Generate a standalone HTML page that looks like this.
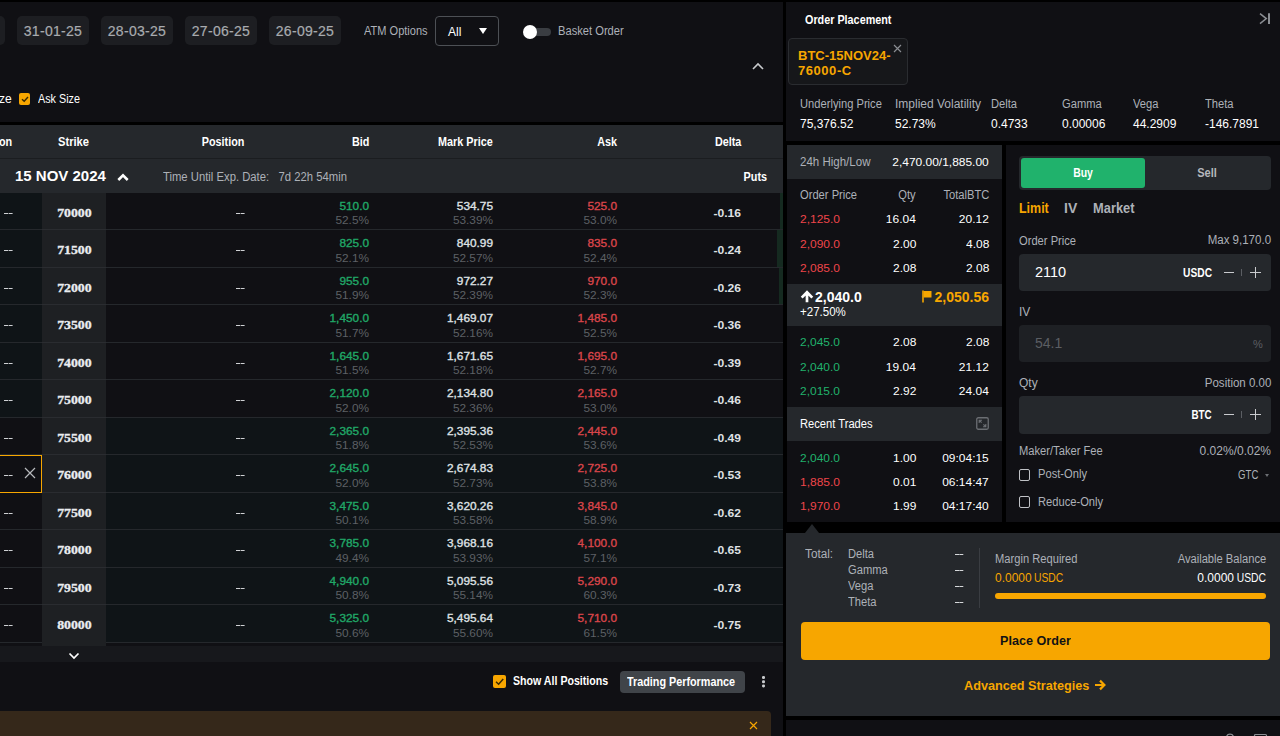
<!DOCTYPE html>
<html><head><meta charset="utf-8"><title>Options</title>
<style>
*{box-sizing:border-box;margin:0;padding:0}
html,body{width:1280px;height:736px;overflow:hidden;background:#000}
body{font-family:"Liberation Sans",sans-serif;font-size:12px;color:#fff;position:relative}
.abs{position:absolute}
#left{position:absolute;left:0;top:2px;width:783px;height:734px;background:#101014;overflow:hidden}
.pill{position:absolute;top:14px;height:29px;width:72px;background:#1d1e22;border-radius:5px;color:#a8abaf;font-size:14px;line-height:30px;-webkit-text-stroke:.2px #a8abaf;text-align:center;letter-spacing:.3px}
.t{position:absolute;white-space:nowrap;line-height:14px;transform-origin:0 50%}
.n{transform:scaleX(.93)}
.n2{transform:scaleX(.96)}
.nb{font-weight:bold;transform:scaleX(.9)}
.ro{transform-origin:100% 50%}
.gray{color:#adb1b8}
.hdr{position:absolute;left:0;top:123px;width:783px;height:34px;background:#25282c;border-bottom:1px solid #1b1d20}
.hdr span{position:absolute;top:10px;font-weight:bold;font-size:12px;line-height:14px;white-space:nowrap;transform:scaleX(.9);transform-origin:100% 50%}
.sub{position:absolute;left:0;top:157px;width:783px;height:34px;background:#25282c}
.row{position:absolute;left:0;width:783px;height:37.5px}
.row>div{position:absolute;top:0;height:37.5px;border-bottom:1px solid #25282c}
.lc{left:0;width:42px}
.lc.sel{border:1px solid #f7a600 !important;border-left:none !important}
.dd,.pos{position:absolute;left:3.5px;top:20px;width:4px;height:1.4px;background:#cfd1d4;box-shadow:4.6px 0 0 #cfd1d4;font-size:0}
.rx{position:absolute;left:24px;top:11px;width:12px;height:12px}
.lc.sel .dd{top:19px}
.sk{left:42px;width:64px;background:#1e2023;border-bottom-color:#2a2c30 !important;text-align:center}
.sk span{display:inline-block;font-family:"Liberation Serif",serif;font-weight:bold;font-size:11.5px;line-height:40px;color:#eaecef;transform:scaleX(1.2);-webkit-text-stroke:.3px #eaecef}
.rc{left:106px;width:677px}
.pos{left:130px}
.c{position:absolute;top:6px;text-align:right;width:90px}
.c b,.c i{display:block;font-style:normal;line-height:14.5px;font-size:11px;transform:scaleX(1.075);transform-origin:100% 50%}
.c b{font-weight:normal;-webkit-text-stroke:.35px currentColor}
.c i{color:#5d6065}
.bid{right:414px}.mark{right:290px}.ask{right:166px}
.g{color:#20a767}.r{color:#d9454a}.w{color:#dfe1e4}
.dl{position:absolute;right:42px;top:13px;font-weight:bold;font-size:11px;color:#dfe1e4;line-height:14px;transform:scaleX(1.1);transform-origin:100% 50%}
.gb{position:absolute;right:0;top:0;height:36.5px;background:#152a20}
</style></head><body>
<div id="left">
<div class="pill" style="left:-67.5px"></div>
<div class="pill" style="left:17px">31-01-25</div>
<div class="pill" style="left:101px">28-03-25</div>
<div class="pill" style="left:185px">27-06-25</div>
<div class="pill" style="left:269px">26-09-25</div>
<div class="t gray n" style="left:364px;top:22px;transform:scaleX(.92)">ATM Options</div>
<div class="abs" style="left:435px;top:14px;width:64px;height:30px;border:1px solid #4d5055;border-radius:4px"></div>
<div class="t" style="left:448px;top:23px;font-size:12px">All</div>
<div class="abs" style="left:479px;top:26px;width:0;height:0;border-left:4px solid transparent;border-right:4px solid transparent;border-top:6px solid #fff"></div>
<div class="abs" style="left:525px;top:26px;width:26px;height:8px;border-radius:4px;background:#3a3d42"></div>
<div class="abs" style="left:523px;top:23px;width:14px;height:14px;border-radius:7px;background:#fff"></div>
<div class="t gray n" style="left:558px;top:22px">Basket Order</div>
<svg class="abs" style="left:751px;top:59px" width="14" height="10" viewBox="0 0 14 10"><path d="M2 8L7 3L12 8" stroke="#c9cbce" stroke-width="1.6" fill="none"/></svg>
<div class="t" style="left:-1px;top:90px">ze</div>
<div class="abs" style="left:19px;top:91px;width:11px;height:12px;border-radius:2px;background:#f7a600"></div>
<svg class="abs" style="left:18.5px;top:91px" width="12" height="12" viewBox="0 0 12 12"><path d="M3 6.2L5.2 8.3L9 4" stroke="#3a2a00" stroke-width="1.4" fill="none"/></svg>
<div class="t" style="left:38px;top:90px;transform:scaleX(.9)">Ask Size</div>
<div class="abs" style="left:0;top:120px;width:783px;height:3px;background:#000"></div>
<div class="hdr">
<span style="left:-1px;transform-origin:0 50%">on</span><span style="left:58px;transform-origin:0 50%;transform:scaleX(.93)">Strike</span><span style="right:539px">Position</span><span style="right:414px">Bid</span><span style="right:290px">Mark Price</span><span style="right:166px">Ask</span><span style="right:42px">Delta</span>
</div>
<div class="sub">
<div class="t" style="left:15px;top:8px;font-size:15px;font-weight:bold;line-height:18px">15 NOV 2024</div>
<svg class="abs" style="left:116px;top:13px" width="14" height="10" viewBox="0 0 14 10"><path d="M2.3 8L7 3.4L11.7 8" stroke="#fff" stroke-width="2.6" fill="none"/></svg>
<div class="t gray" style="left:163px;top:11px;transform:scaleX(.94)">Time Until Exp. Date:&nbsp;&nbsp;&nbsp;7d 22h 54min</div>
<div class="t nb ro" style="right:16px;top:11px">Puts</div>
</div>
<div class="row" style="top:190.5px">
<div class="lc" style="background:#0f1417"><span class="dd">--</span></div>
<div class="sk"><span>70000</span></div>
<div class="rc" style="background:#101014"><div class="gb" style="width:3px"></div>
<span class="pos">--</span>
<span class="c bid"><b class="g">510.0</b><i>52.5%</i></span>
<span class="c mark"><b class="w">534.75</b><i>53.39%</i></span>
<span class="c ask"><b class="r">525.0</b><i>53.0%</i></span>
<span class="dl">-0.16</span>
</div></div>
<div class="row" style="top:228.0px">
<div class="lc" style="background:#0f1417"><span class="dd">--</span></div>
<div class="sk"><span>71500</span></div>
<div class="rc" style="background:#101014"><div class="gb" style="width:6px"></div>
<span class="pos">--</span>
<span class="c bid"><b class="g">825.0</b><i>52.1%</i></span>
<span class="c mark"><b class="w">840.99</b><i>52.57%</i></span>
<span class="c ask"><b class="r">835.0</b><i>52.4%</i></span>
<span class="dl">-0.24</span>
</div></div>
<div class="row" style="top:265.5px">
<div class="lc" style="background:#0f1417"><span class="dd">--</span></div>
<div class="sk"><span>72000</span></div>
<div class="rc" style="background:#101014"><div class="gb" style="width:4px"></div>
<span class="pos">--</span>
<span class="c bid"><b class="g">955.0</b><i>51.9%</i></span>
<span class="c mark"><b class="w">972.27</b><i>52.39%</i></span>
<span class="c ask"><b class="r">970.0</b><i>52.3%</i></span>
<span class="dl">-0.26</span>
</div></div>
<div class="row" style="top:303.0px">
<div class="lc" style="background:#0f1417"><span class="dd">--</span></div>
<div class="sk"><span>73500</span></div>
<div class="rc" style="background:#101014">
<span class="pos">--</span>
<span class="c bid"><b class="g">1,450.0</b><i>51.7%</i></span>
<span class="c mark"><b class="w">1,469.07</b><i>52.16%</i></span>
<span class="c ask"><b class="r">1,485.0</b><i>52.5%</i></span>
<span class="dl">-0.36</span>
</div></div>
<div class="row" style="top:340.5px">
<div class="lc" style="background:#0f1417"><span class="dd">--</span></div>
<div class="sk"><span>74000</span></div>
<div class="rc" style="background:#101014">
<span class="pos">--</span>
<span class="c bid"><b class="g">1,645.0</b><i>51.5%</i></span>
<span class="c mark"><b class="w">1,671.65</b><i>52.18%</i></span>
<span class="c ask"><b class="r">1,695.0</b><i>52.7%</i></span>
<span class="dl">-0.39</span>
</div></div>
<div class="row" style="top:378.0px">
<div class="lc" style="background:#0f1417"><span class="dd">--</span></div>
<div class="sk"><span>75000</span></div>
<div class="rc" style="background:#101014">
<span class="pos">--</span>
<span class="c bid"><b class="g">2,120.0</b><i>52.0%</i></span>
<span class="c mark"><b class="w">2,134.80</b><i>52.36%</i></span>
<span class="c ask"><b class="r">2,165.0</b><i>53.0%</i></span>
<span class="dl">-0.46</span>
</div></div>
<div class="row" style="top:415.5px">
<div class="lc" style="background:#101014"><span class="dd">--</span></div>
<div class="sk"><span>75500</span></div>
<div class="rc" style="background:#0f1417">
<span class="pos">--</span>
<span class="c bid"><b class="g">2,365.0</b><i>51.8%</i></span>
<span class="c mark"><b class="w">2,395.36</b><i>52.53%</i></span>
<span class="c ask"><b class="r">2,445.0</b><i>53.6%</i></span>
<span class="dl">-0.49</span>
</div></div>
<div class="row" style="top:453.0px">
<div class="lc sel" style="background:#101014"><span class="dd">--</span><svg class="rx" viewBox="0 0 12 12"><path d="M1 1L11 11M11 1L1 11" stroke="#b8babd" stroke-width="1.2" fill="none"/></svg></div>
<div class="sk"><span>76000</span></div>
<div class="rc" style="background:#0f1417">
<span class="pos">--</span>
<span class="c bid"><b class="g">2,645.0</b><i>52.0%</i></span>
<span class="c mark"><b class="w">2,674.83</b><i>52.73%</i></span>
<span class="c ask"><b class="r">2,725.0</b><i>53.8%</i></span>
<span class="dl">-0.53</span>
</div></div>
<div class="row" style="top:490.5px">
<div class="lc" style="background:#101014"><span class="dd">--</span></div>
<div class="sk"><span>77500</span></div>
<div class="rc" style="background:#0f1417">
<span class="pos">--</span>
<span class="c bid"><b class="g">3,475.0</b><i>50.1%</i></span>
<span class="c mark"><b class="w">3,620.26</b><i>53.58%</i></span>
<span class="c ask"><b class="r">3,845.0</b><i>58.9%</i></span>
<span class="dl">-0.62</span>
</div></div>
<div class="row" style="top:528.0px">
<div class="lc" style="background:#101014"><span class="dd">--</span></div>
<div class="sk"><span>78000</span></div>
<div class="rc" style="background:#0f1417">
<span class="pos">--</span>
<span class="c bid"><b class="g">3,785.0</b><i>49.4%</i></span>
<span class="c mark"><b class="w">3,968.16</b><i>53.93%</i></span>
<span class="c ask"><b class="r">4,100.0</b><i>57.1%</i></span>
<span class="dl">-0.65</span>
</div></div>
<div class="row" style="top:565.5px">
<div class="lc" style="background:#101014"><span class="dd">--</span></div>
<div class="sk"><span>79500</span></div>
<div class="rc" style="background:#0f1417">
<span class="pos">--</span>
<span class="c bid"><b class="g">4,940.0</b><i>50.8%</i></span>
<span class="c mark"><b class="w">5,095.56</b><i>55.14%</i></span>
<span class="c ask"><b class="r">5,290.0</b><i>60.3%</i></span>
<span class="dl">-0.73</span>
</div></div>
<div class="row" style="top:603.0px">
<div class="lc" style="background:#101014"><span class="dd">--</span></div>
<div class="sk"><span>80000</span></div>
<div class="rc" style="background:#0f1417">
<span class="pos">--</span>
<span class="c bid"><b class="g">5,325.0</b><i>50.6%</i></span>
<span class="c mark"><b class="w">5,495.64</b><i>55.60%</i></span>
<span class="c ask"><b class="r">5,710.0</b><i>61.5%</i></span>
<span class="dl">-0.75</span>
</div></div>
<div class="abs" style="left:42px;top:640px;width:64px;height:4px;background:#1e2023"></div>
<div class="abs" style="left:0;top:644px;width:783px;height:16px;background:#17181c"></div>
<svg class="abs" style="left:68px;top:650px" width="12" height="8" viewBox="0 0 12 8"><path d="M1.5 1.5L6 6L10.5 1.5" stroke="#fff" stroke-width="1.7" fill="none"/></svg>
<div class="abs" style="left:493px;top:673px;width:13px;height:13px;border-radius:2px;background:#f7a600"></div>
<svg class="abs" style="left:493px;top:673px" width="13" height="13" viewBox="0 0 13 13"><path d="M3 6.8L5.6 9.2L10.2 4" stroke="#3a2a00" stroke-width="1.5" fill="none"/></svg>
<div class="t nb" style="left:513px;top:672px;font-size:12px;transform:scaleX(.885)">Show All Positions</div>
<div class="abs" style="left:620px;top:669px;width:125px;height:22px;border-radius:4px;background:#404449"></div>
<div class="t nb" style="left:627px;top:673px;font-size:12px">Trading Performance</div>
<div class="abs" style="left:762.2px;top:674.3px;width:2.6px;height:2.6px;background:#c9cbce;border-radius:1.3px;box-shadow:0 4.2px 0 #c9cbce,0 8.4px 0 #c9cbce"></div>
<div class="abs" style="left:0;top:709px;width:771px;height:30px;background:#35281a;border-radius:0 4px 0 0"></div>
<svg class="abs" style="left:749px;top:719px" width="9" height="9" viewBox="0 0 9 9"><path d="M1 1L8 8M8 1L1 8" stroke="#f7a600" stroke-width="1.15" fill="none"/></svg>
</div>
<style>
.pn{position:absolute;background:#101014}
.band{position:absolute;left:787px;width:215px;background:#25282c}
.red{color:#ef454a}.grn{color:#20b26c}.org{color:#f7a600}
.inp{position:absolute;left:1019px;width:252px;background:#25282c;border-radius:4px}
.cb{position:absolute;left:1019px;width:11px;height:12px;border:1px solid #c0c2c6;border-radius:2px;margin-top:-.5px}
.q{right:364px;transform-origin:100% 50%}.tt{right:291px;transform-origin:100% 50%}.p{left:800px}
.q:not(.n),.tt:not(.n),.p:not(.n):not(.n2){font-size:11.5px;transform:scaleX(1.04)}
.dbox{width:3.9px;height:1.4px;background:#d6d8db;box-shadow:4.3px 0 0 #d6d8db}
</style>
<div class="pn" style="left:786px;top:2px;width:494px;height:139px"></div>
<div class="pn" style="left:787px;top:145px;width:215px;height:377px"></div>
<div class="pn" style="left:1006px;top:145px;width:274px;height:377px"></div>
<div class="pn" style="left:786px;top:533px;width:494px;height:183px;background:#25282c"></div>
<div class="pn" style="left:786px;top:720px;width:494px;height:16px"></div>
<svg class="abs" style="left:1224px;top:733px" width="46" height="3" viewBox="0 0 46 3"><path d="M2.5 3.5A3.8 3.8 0 0 1 9.5 3.5" stroke="#8a8d92" stroke-width="1.2" fill="none"/><path d="M30.5 3.5V2.5A1 1 0 0 1 31.5 1.5H41.5A1 1 0 0 1 42.5 2.5V3.5" stroke="#8a8d92" stroke-width="1.2" fill="none"/></svg>
<div class="abs" style="left:805px;top:524px;width:0;height:0;border-left:7px solid transparent;border-right:7px solid transparent;border-bottom:9px solid #25282c"></div>

<div class="t nb" style="left:805px;top:13px;font-size:12px">Order Placement</div>
<svg class="abs" style="left:1257px;top:12px" width="15" height="13" viewBox="0 0 15 13"><path d="M3 1.6L9.3 6.6L3 11.6" stroke="#8a8d92" stroke-width="1.5" fill="none"/><path d="M12 1.2V12" stroke="#8a8d92" stroke-width="2"/></svg>
<div class="abs" style="left:788px;top:38px;width:120px;height:47px;background:#16171a;border:1px solid #2a2c30;border-radius:4px"></div>
<div class="t org" style="left:798px;top:48px;font-weight:bold;font-size:13px;line-height:15px">BTC-15NOV24-<br><span style="letter-spacing:.55px">76000-C</span></div>
<svg class="abs" style="left:893px;top:43.5px" width="9" height="9" viewBox="0 0 9 9"><path d="M1 1L8 8M8 1L1 8" stroke="#8a8d92" stroke-width="1.15" fill="none"/></svg>
<div class="t gray n" style="left:800px;top:97px">Underlying Price</div><div class="t" style="left:800px;top:117px">75,376.52</div>
<div class="t gray" style="left:895px;top:97px">Implied Volatility</div><div class="t" style="left:895px;top:117px">52.73%</div>
<div class="t gray n" style="left:991px;top:97px">Delta</div><div class="t" style="left:991px;top:117px">0.4733</div>
<div class="t gray n" style="left:1062px;top:97px">Gamma</div><div class="t" style="left:1062px;top:117px">0.00006</div>
<div class="t gray n" style="left:1133px;top:97px">Vega</div><div class="t" style="left:1133px;top:117px">44.2909</div>
<div class="t gray n" style="left:1205px;top:97px">Theta</div><div class="t" style="left:1205px;top:117px">-146.7891</div>

<div class="band" style="top:145px;height:34px"></div>
<div class="t gray n2 p" style="top:155px">24h High/Low</div><div class="t tt" style="top:155px">2,470.00/1,885.00</div>
<div class="t gray n p" style="top:188px">Order Price</div><div class="t gray n ro q" style="top:188px">Qty</div><div class="t gray n ro tt" style="top:188px">TotalBTC</div>
<div class="t red p" style="top:212px">2,125.0</div><div class="t q" style="top:212px">16.04</div><div class="t tt" style="top:212px">20.12</div>
<div class="t red p" style="top:237px">2,090.0</div><div class="t q" style="top:237px">2.00</div><div class="t tt" style="top:237px">4.08</div>
<div class="t red p" style="top:261px">2,085.0</div><div class="t q" style="top:261px">2.08</div><div class="t tt" style="top:261px">2.08</div>
<div class="band" style="top:284px;height:42px"></div>
<svg class="abs" style="left:800px;top:290px" width="14" height="13" viewBox="0 0 14 13"><path d="M7 12.3V2.6M1.7 7.6L7 2.2L12.3 7.6" stroke="#fff" stroke-width="2.7" fill="none"/></svg>
<div class="t" style="left:815px;top:289px;font-weight:bold;font-size:14px;line-height:16px">2,040.0</div>
<div class="t n2 p" style="top:305px">+27.50%</div>
<svg class="abs" style="left:922px;top:290px" width="10" height="13" viewBox="0 0 10 13"><path d="M1 0.5V12.5" stroke="#f7a600" stroke-width="1.6"/><path d="M1.5 1H9.5V7.5H1.5Z" fill="#f7a600"/></svg>
<div class="t org tt" style="top:289px;font-weight:bold;font-size:14px;line-height:16px;transform:none">2,050.56</div>
<div class="t grn p" style="top:335px">2,045.0</div><div class="t q" style="top:335px">2.08</div><div class="t tt" style="top:335px">2.08</div>
<div class="t grn p" style="top:360px">2,040.0</div><div class="t q" style="top:360px">19.04</div><div class="t tt" style="top:360px">21.12</div>
<div class="t grn p" style="top:384px">2,015.0</div><div class="t q" style="top:384px">2.92</div><div class="t tt" style="top:384px">24.04</div>
<div class="band" style="top:407px;height:34px"></div>
<div class="t n p" style="top:417px">Recent Trades</div>
<svg class="abs" style="left:976px;top:417px" width="13" height="13" viewBox="0 0 13 13"><rect x="0.75" y="0.75" width="11.5" height="11.5" rx="1.5" stroke="#6b6e73" stroke-width="1.3" fill="none"/><path d="M3.2 6V3.2H6M9.8 7V9.8H7M3.4 3.4L5.6 5.6M9.6 9.6L7.4 7.4" stroke="#6b6e73" stroke-width="1.1" fill="none"/></svg>
<div class="t grn p" style="top:451px">2,040.0</div><div class="t q" style="top:451px">1.00</div><div class="t tt" style="top:451px">09:04:15</div>
<div class="t red p" style="top:475px">1,885.0</div><div class="t q" style="top:475px">0.01</div><div class="t tt" style="top:475px">06:14:47</div>
<div class="t red p" style="top:499px">1,970.0</div><div class="t q" style="top:499px">1.99</div><div class="t tt" style="top:499px">04:17:40</div>

<div class="abs" style="left:1019px;top:156px;width:252px;height:34px;background:#25282c;border-radius:4px"></div>
<div class="abs" style="left:1021px;top:158px;width:124px;height:30px;background:#20b26c;border-radius:3px"></div>
<div class="t" style="left:1021px;width:124px;text-align:center;top:166px;font-weight:bold;transform:scaleX(.87);transform-origin:50% 50%">Buy</div>
<div class="t" style="left:1145px;width:124px;text-align:center;top:166px;font-weight:bold;color:#b4b7bc;transform:scaleX(.92);transform-origin:50% 50%">Sell</div>
<div class="t org" style="left:1019px;top:200px;font-weight:bold;font-size:14px;line-height:16px;transform:scaleX(.89)">Limit</div>
<div class="t" style="left:1064px;top:200px;font-weight:bold;font-size:14px;line-height:16px;color:#adb1b8">IV</div>
<div class="t" style="left:1093px;top:200px;font-weight:bold;font-size:14px;line-height:16px;color:#adb1b8;transform:scaleX(.92)">Market</div>
<div class="t gray n" style="left:1019px;top:234px">Order Price</div><div class="t gray n2 ro" style="right:9px;top:233px">Max 9,170.0</div>
<div class="inp" style="top:254px;height:37px"></div>
<div class="t" style="left:1035px;top:264px;font-size:14.5px;line-height:16px">2110</div>
<div class="t ro" style="right:68px;top:266px;font-weight:bold;transform:scaleX(.85)">USDC</div>
<div class="abs" style="left:1224px;top:272px;width:10px;height:1.4px;background:#c9cbce"></div>
<div class="abs" style="left:1241px;top:269px;width:1px;height:7px;background:#5b5e63"></div>
<div class="abs" style="left:1250px;top:272px;width:11px;height:1.4px;background:#c9cbce"></div><div class="abs" style="left:1255px;top:267px;width:1.4px;height:11px;background:#c9cbce"></div>
<div class="t gray" style="left:1019px;top:305px">IV</div>
<div class="inp" style="top:325px;height:37px;background:#1e2024"></div>
<div class="t" style="left:1035px;top:335px;font-size:14px;line-height:16px;color:#5b5e63">54.1</div>
<div class="t" style="left:1253px;top:337px;color:#5b5e63;font-size:11px">%</div>
<div class="t gray" style="left:1019px;top:376px">Qty</div><div class="t gray n2 ro" style="right:9px;top:376px">Position 0.00</div>
<div class="inp" style="top:396px;height:38px"></div>
<div class="t ro" style="right:68px;top:408px;font-weight:bold;transform:scaleX(.82)">BTC</div>
<div class="abs" style="left:1224px;top:414px;width:10px;height:1.4px;background:#c9cbce"></div>
<div class="abs" style="left:1241px;top:411px;width:1px;height:7px;background:#5b5e63"></div>
<div class="abs" style="left:1250px;top:414px;width:11px;height:1.4px;background:#c9cbce"></div><div class="abs" style="left:1255px;top:409px;width:1.4px;height:11px;background:#c9cbce"></div>
<div class="t gray n" style="left:1019px;top:444px">Maker/Taker Fee</div><div class="t gray" style="right:9px;top:444px">0.02%/0.02%</div>
<div class="cb" style="top:469px"></div><div class="t gray n" style="left:1038px;top:467px">Post-Only</div>
<div class="t gray ro" style="right:22px;top:468px;transform:scaleX(.8)">GTC</div>
<div class="abs" style="left:1265px;top:474px;width:0;height:0;border-left:2.5px solid transparent;border-right:2.5px solid transparent;border-top:3.5px solid #6b6e73"></div>
<div class="cb" style="top:496px"></div><div class="t gray n" style="left:1038px;top:495px">Reduce-Only</div>

<div class="t gray" style="left:805px;top:547px;transform:scaleX(.98)">Total:</div>
<div class="t gray n" style="left:848px;top:547px">Delta</div><div class="abs dbox" style="left:954.8px;top:553.7px"></div>
<div class="t gray n" style="left:848px;top:563px">Gamma</div><div class="abs dbox" style="left:954.8px;top:569.7px"></div>
<div class="t gray n" style="left:848px;top:579px">Vega</div><div class="abs dbox" style="left:954.8px;top:585.7px"></div>
<div class="t gray n" style="left:848px;top:595px">Theta</div><div class="abs dbox" style="left:954.8px;top:601.7px"></div>
<div class="abs" style="left:979px;top:548px;width:1px;height:60px;background:#3a3d42"></div>
<div class="t gray n" style="left:995px;top:552px">Margin Required</div><div class="t gray n ro" style="right:14px;top:552px">Available Balance</div>
<div class="t org" style="left:995px;top:571px">0.0000</div><div class="t org" style="left:1034px;top:571px;transform:scaleX(.86)">USDC</div>
<div class="t ro" style="right:46px;top:571px">0.0000</div><div class="t ro" style="right:14px;top:571px;transform:scaleX(.86)">USDC</div>
<div class="abs" style="left:995px;top:593px;width:271px;height:6px;border-radius:3px;background:#f7a600"></div>
<div class="abs" style="left:801px;top:622px;width:469px;height:38px;border-radius:4px;background:#f7a600"></div>
<div class="t" style="left:801px;width:469px;text-align:center;top:633px;font-weight:bold;font-size:13px;line-height:15px;color:#121214;transform:scaleX(.97);transform-origin:50% 50%">Place Order</div>
<div class="t org" style="left:964px;top:678px;font-weight:bold;font-size:13px;line-height:15px;transform:scaleX(.975)">Advanced Strategies</div>
<svg class="abs" style="left:1094px;top:679px" width="12" height="12" viewBox="0 0 12 12"><path d="M1 6H10.3M6 1.6L10.4 6L6 10.4" stroke="#f7a600" stroke-width="2.2" fill="none"/></svg>
</body></html>
